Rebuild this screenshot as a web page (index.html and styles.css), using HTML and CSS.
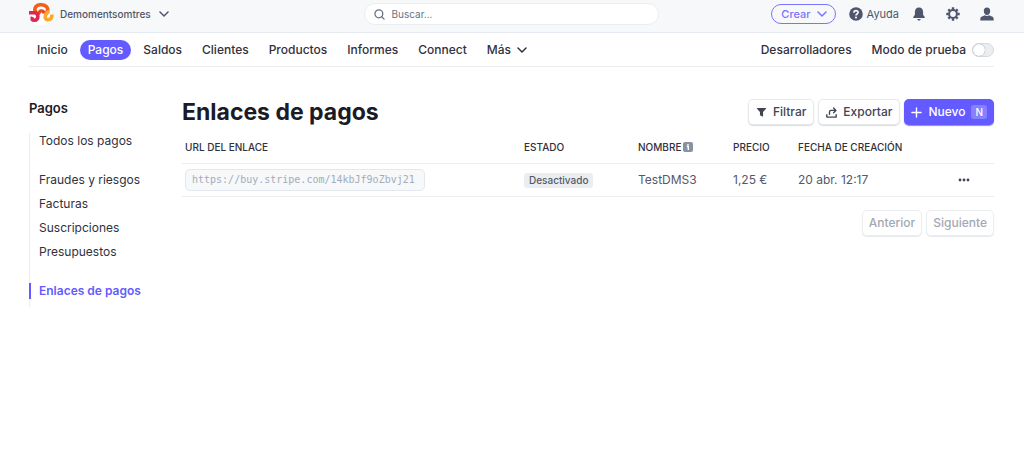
FILE: index.html
```html
<!DOCTYPE html>
<html lang="es">
<head>
<meta charset="utf-8">
<meta name="viewport" content="width=device-width, initial-scale=1">
<title>Enlaces de pagos</title>
<link rel="stylesheet" href="styles.css">
</head>
<body>
<header class="topbar">
  <button class="account" type="button">
    <svg class="logo" viewBox="0 0 26 26" aria-hidden="true">
      <circle cx="13" cy="13.500" r="12" fill="#fff" stroke="#e9edf2" stroke-width=".6"/>
      <g fill="none" stroke-linejoin="round">
        <path d="M8.500 11.800C5.500 9 6.500 4 12.500 3.800C19.500 3.600 21.500 9 18 12" stroke="#f2611c" stroke-width="3.600"/>
        <path d="M8 12.300H11C11.500 9 15.500 9 16 12.500" stroke="#ee4423" stroke-width="3.200"/>
        <path d="M1 11.800H6.500C11 11.800 11 19.300 6.500 19.300C4 19.300 3.500 18 4.500 16" stroke="#e0254f" stroke-width="3.600"/>
        <path d="M21.500 10.500C17 11.500 15.800 18 19 18.600C22.500 19 24 17.500 24 13.500" stroke="#fba62c" stroke-width="3.600"/>
      </g>
    </svg>
    <span>Demomentsomtres</span>
    <svg class="chevron" viewBox="0 0 10 10" aria-hidden="true"><path d="M1 3l4 4 4-4"/></svg>
  </button>
  <form class="search" role="search">
    <svg class="search-icon" viewBox="0 0 12 12" aria-hidden="true"><circle cx="5.300" cy="5.300" r="4.300"/><path d="M8.500 8.500l2.500 2.500"/></svg>
    <input class="search-input" type="search" placeholder="Buscar..." aria-label="Buscar">
  </form>
  <div class="tools">
    <button class="create" type="button">Crear
      <svg class="chevron" viewBox="0 0 10 10" aria-hidden="true"><path d="M1 3l4 4 4-4"/></svg>
    </button>
    <button class="help" type="button">
      <svg class="tool-icon" viewBox="0 0 14 14" aria-hidden="true"><circle cx="7" cy="7" r="6.800" fill="currentColor"/><path d="M4.900 5.600C5 2.900 9.200 3 9.100 5.500C9 7 7 6.900 7 8.400" fill="none" stroke="#f6f8fa" stroke-width="1.700"/><circle cx="7" cy="10.500" r="1.100" fill="#f6f8fa"/></svg>
      Ayuda
    </button>
    <button class="icon-button" type="button" aria-label="Notificaciones">
      <svg class="tool-icon" viewBox="0 0 14 14" fill="currentColor" aria-hidden="true"><path d="M7 .5C4.300.5 2.900 2.500 2.900 5V7.800L1.300 10C1 10.500 1.200 11 1.800 11H12.200C12.800 11 13 10.500 12.700 10L11.100 7.800V5C11.100 2.500 9.700.5 7 .5zM5.300 12H8.700C8.300 14 5.700 14 5.300 12z"/></svg>
    </button>
    <button class="icon-button" type="button" aria-label="Configuración">
      <svg class="tool-icon" viewBox="0 0 14 14" fill="none" stroke="currentColor" aria-hidden="true"><circle cx="7" cy="7" r="3.900" stroke-width="2"/><path d="M7 .3v2.500M7 11.200v2.500M.3 7h2.500M11.200 7h2.500M2.300 2.300L4 4M10 10l1.700 1.700M2.300 11.700L4 10M10 4l1.700-1.700" stroke-width="2.400"/></svg>
    </button>
    <button class="icon-button" type="button" aria-label="Perfil">
      <svg class="tool-icon" viewBox="0 0 14 14" fill="currentColor" aria-hidden="true"><path d="M7 .5C4.900.5 3.800 2 3.800 4C3.800 6.300 5 8 7 8S10.200 6.300 10.200 4C10.200 2 9.100.5 7 .5zM5 8.300L1.500 9.800C.5 10.300.3 11 .3 13.500H13.700C13.700 11 13.500 10.300 12.500 9.800L9 8.300C8 9.100 6 9.100 5 8.300z"/></svg>
    </button>
  </div>
</header>

<nav class="mainnav" aria-label="Principal">
  <a class="navlink" href="#">Inicio</a>
  <a class="navlink navlink-active" href="#" aria-current="page">Pagos</a>
  <a class="navlink" href="#">Saldos</a>
  <a class="navlink" href="#">Clientes</a>
  <a class="navlink" href="#">Productos</a>
  <a class="navlink" href="#">Informes</a>
  <a class="navlink" href="#">Connect</a>
  <button class="navlink navmore" type="button">Más
    <svg class="chevron" viewBox="0 0 10 10" aria-hidden="true"><path d="M1 3l4 4 4-4"/></svg>
  </button>
  <a class="developers" href="#">Desarrolladores</a>
  <label class="testmode">Modo de prueba
    <input class="switch" type="checkbox" role="switch">
  </label>
</nav>

<div class="layout">
  <aside class="sidebar">
    <h2 class="sidebar-title">Pagos</h2>
    <nav class="sidenav" aria-label="Pagos">
      <div class="sidegroup"><a class="sidelink" href="#">Todos los pagos</a></div>
      <div class="sidegroup">
        <a class="sidelink" href="#">Fraudes y riesgos</a>
        <a class="sidelink" href="#">Facturas</a>
        <a class="sidelink" href="#">Suscripciones</a>
        <a class="sidelink" href="#">Presupuestos</a>
      </div>
      <div class="sidegroup"><a class="sidelink sidelink-active" href="#" aria-current="page">Enlaces de pagos</a></div>
    </nav>
  </aside>

  <main class="content">
    <div class="heading">
      <h1 class="title">Enlaces de pagos</h1>
      <div class="actions">
        <button class="button" type="button">
          <svg class="button-icon" viewBox="0 0 12 12" aria-hidden="true"><path d="M1.500 1h9c.6 0 .8.600.4 1L7.700 5.500V10.500L4.300 9V5.500L1.100 2C.7 1.600.9 1 1.500 1z" fill="currentColor"/></svg>
          Filtrar
        </button>
        <button class="button" type="button">
          <svg class="button-icon" viewBox="0 0 12 12" fill="none" stroke="currentColor" stroke-width="1.500" stroke-linecap="round" stroke-linejoin="round" aria-hidden="true"><path d="M.9 8.500V11H11.100V8.500M3.800 8V5.500C3.800 4.300 4.500 3.700 5.500 3.700H10.500M8.300 1.200l2.500 2.500-2.500 2.500"/></svg>
          Exportar
        </button>
        <button class="button button-primary" type="button">
          <svg class="button-icon" viewBox="0 0 12 12" fill="none" stroke="currentColor" stroke-width="1.500" stroke-linecap="round" aria-hidden="true"><path d="M6 1v10M1 6h10"/></svg>
          Nuevo <kbd class="shortcut">N</kbd>
        </button>
      </div>
    </div>

    <table class="links">
      <colgroup><col><col class="col-status"><col class="col-name"><col class="col-price"><col class="col-date"><col class="col-menu"></colgroup>
      <thead>
        <tr>
          <th scope="col">URL DEL ENLACE</th>
          <th scope="col">ESTADO</th>
          <th scope="col"><span class="with-info">NOMBRE
            <svg class="info" viewBox="0 0 10 10" aria-hidden="true"><rect width="10" height="10" rx="2" fill="#8792a2"/><path d="M3.800 4.500H5.300V8M5 2v1.400" fill="none" stroke="#fff" stroke-width="1.400"/></svg></span></th>
          <th scope="col">PRECIO</th>
          <th scope="col">FECHA DE CREACIÓN</th>
          <th aria-label="Acciones"></th>
        </tr>
      </thead>
      <tbody>
        <tr>
          <td><input class="url" type="text" readonly value="https://buy.stripe.com/14kbJf9oZbvj21" aria-label="URL del enlace"></td>
          <td><span class="badge">Desactivado</span></td>
          <td>TestDMS3</td>
          <td>1,25 €</td>
          <td>20 abr. 12:17</td>
          <td><button class="more" type="button" aria-label="Más acciones"><svg class="dots" viewBox="0 0 12 4" fill="currentColor" aria-hidden="true"><circle cx="2" cy="2" r="1.400"/><circle cx="6" cy="2" r="1.400"/><circle cx="10" cy="2" r="1.400"/></svg></button></td>
        </tr>
      </tbody>
    </table>

    <div class="pager">
      <button class="button" type="button" disabled>Anterior</button>
      <button class="button" type="button" disabled>Siguiente</button>
    </div>
  </main>
</div>
</body>
</html>
```

FILE: styles.css
```css
* { box-sizing: border-box; }

body {
  margin: 0;
  background: #fff;
  color: #30313d;
  font: 400 12px/16px Inter, "Liberation Sans", sans-serif;
}

button, input { font: inherit; color: inherit; }
button { margin: 0; padding: 0; border: 0; background: none; cursor: pointer; }
a { color: inherit; text-decoration: none; }
svg { display: block; flex: none; }

.chevron {
  width: 10px;
  height: 10px;
  fill: none;
  stroke: currentColor;
  stroke-width: 1.5;
  stroke-linecap: round;
  stroke-linejoin: round;
}

/* Top bar */
.topbar {
  display: grid;
  grid-template-columns: 1fr minmax(160px, 295px) 1fr;
  align-items: center;
  height: 33px;
  padding: 0 30px 4px 28px;
  background: #f6f8fa;
  border-bottom: 1px solid #e6ebf1;
  color: #4f566b;
}
.account { display: flex; align-items: center; gap: 6px; justify-self: start; font-size: 10px; font-weight: 500; }
.account .chevron { margin-left: 2px; }
.logo { width: 26px; height: 26px; }

.search {
  display: flex;
  align-items: center;
  gap: 7px;
  height: 22px;
  padding: 0 9px;
  border: 1px solid #ebeef1;
  border-radius: 11px;
  background: #fff;
}
.search-icon { width: 11px; height: 11px; fill: none; stroke: #687385; stroke-width: 1.4; stroke-linecap: round; }
.search-input { flex: 1; min-width: 0; padding: 0; border: 0; outline: 0; background: none; font-size: 10px; }
.search-input::placeholder { color: #687385; opacity: 1; }

.tools { display: flex; align-items: center; justify-self: end; gap: 20px; font-size: 11px; }
.create {
  display: flex;
  align-items: center;
  gap: 6px;
  height: 20px;
  padding: 0 8px 0 9px;
  border: 1px solid #7a73ff;
  border-radius: 10px;
  color: #7a73ff;
  font-weight: 500;
}
.help { display: flex; align-items: center; gap: 4px; margin-left: -7px; }
.help + .icon-button { margin-left: -7px; }
.tool-icon { width: 14px; height: 14px; }

/* Main navigation */
.mainnav {
  display: flex;
  align-items: center;
  gap: 4px;
  height: 34px;
  margin: 0 30px 0 29px;
  border-bottom: 1px solid #ebeef1;
  font-weight: 500;
}
.navlink { padding: 2px 8px; border-radius: 10px; }
.navlink-active { background: #635bff; color: #fff; }
.navmore { display: flex; align-items: center; gap: 6px; }
.developers { margin-left: auto; }
.testmode { display: flex; align-items: center; gap: 6px; margin-left: 16px; }
.switch {
  appearance: none;
  display: flex;
  width: 22px;
  height: 14px;
  margin: 0;
  border: 1px solid #d5dbe1;
  border-radius: 7px;
  background: #ebeef1;
}
.switch::before { content: ""; width: 12px; height: 12px; border-radius: 6px; background: #fff; box-shadow: 0 0 1px #687385; }
.switch:checked { justify-content: flex-end; background: #ed6704; }

/* Page layout */
.layout {
  display: grid;
  grid-template-columns: 128px minmax(0, 1fr);
  gap: 25px;
  padding: 31px 30px 0 29px;
}
.sidebar { padding-top: 2px; }
.sidebar-title { margin: 0 0 17px; font-size: 13px; line-height: 16px; font-weight: 600; color: #1a1b25; }
.sidenav { display: flex; flex-direction: column; gap: 23px; border-left: 1px solid #ebeef1; padding-bottom: 8px; }
.sidegroup { display: flex; flex-direction: column; gap: 8px; }
.sidelink { margin-left: -1px; padding-left: 10px; }
.sidelink-active { padding-left: 8px; border-left: 2px solid #635bff; color: #635bff; font-weight: 600; }

.heading { display: flex; align-items: center; justify-content: space-between; }
.title { margin: 0; font-size: 23px; line-height: 28px; font-weight: 700; color: #1a1b25; }
.actions, .pager { display: flex; gap: 6px; padding-right: 1px; }
.button {
  display: flex;
  align-items: center;
  gap: 6px;
  height: 24px;
  padding: 0 7px;
  border-radius: 4px;
  background: #fff;
  box-shadow: 0 0 0 1px #e6e8ec, 0 1px 1px 1px #d8dce2;
  color: #414552;
  font-weight: 500;
}
.button:disabled { padding: 0 6px; color: #a3a8b3; box-shadow: 0 0 0 1px #ebeef1, 0 1px 1px 1px #e6e9ed; cursor: default; }
.button-icon { width: 11px; height: 11px; }
.button-primary { padding: 0 6px; background: #635bff; color: #fff; box-shadow: 0 0 0 1px #635bff, 0 1px 1px 1px #8a84ff; }
.shortcut { padding: 0 4px; border-radius: 3px; background: #8780ff; font: 500 10px/14px Inter, sans-serif; }

/* Table */
.links { width: 100%; table-layout: fixed; border-collapse: collapse; margin-top: 5px; }
.links th, .links td { padding: 0 3px; text-align: left; white-space: nowrap; }
.links th { height: 32px; border-bottom: 1px solid #ebeef1; font-size: 10px; line-height: 12px; font-weight: 500; color: #30313d; }
.links td { height: 33px; border-bottom: 1px solid #ebeef1; color: #545969; }
.col-status { width: 114px; }
.col-name { width: 95px; }
.col-price { width: 65px; }
.col-date { width: 160px; }
.col-menu { width: 39px; }
.with-info { display: flex; align-items: center; gap: 2px; }
.info { width: 10px; height: 10px; }
.url {
  display: block;
  width: 240px;
  max-width: 100%;
  height: 22px;
  padding: 0 6px;
  border: 1px solid #e3e8ee;
  border-radius: 5px;
  background: #f6f8fa;
  color: #a3acba;
  font: 10px/16px "DejaVu Sans Mono", monospace;
}
.badge { display: inline-block; padding: 0 5px; border-radius: 3px; background: #ebeef1; font-size: 10px; line-height: 15px; font-weight: 500; vertical-align: middle; }
.more { display: block; color: #414552; }
.dots { width: 12px; height: 4px; }
.pager { justify-content: flex-end; margin-top: 14px; }
```
